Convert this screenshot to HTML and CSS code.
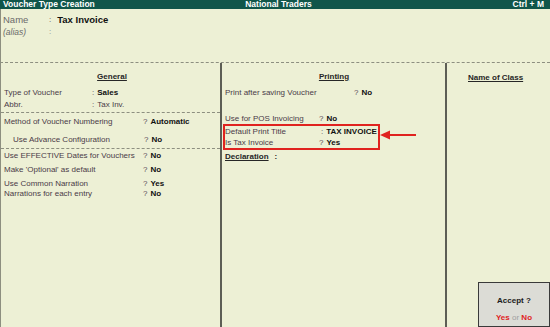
FILE: index.html
```html
<!DOCTYPE html>
<html lang="en">
<head>
    <meta charset="UTF-8">
    <title>Voucher Type Creation</title>
    <link rel="stylesheet" href="styles.css">
</head>
<body>
    <div class="titlebar">
        <span>Voucher Type Creation</span>
        <span class="company">National Traders</span>
        <span class="shortcut">Ctrl + M</span>
    </div>

    <div class="top">
        <div class="row name-row">
            <span class="name-label">Name</span>
            <span class="mark">:</span>
            <span class="name-value">Tax Invoice</span>
        </div>
        <div class="row alias-row">
            <span class="name-label">(alias)</span>
            <span class="mark">:</span>
        </div>
    </div>

    <div class="main">
        <!-- General -->
        <div class="col col-general">
            <div class="section first">
                <div class="heading">General</div>
                <div class="row">
                    <span class="label w-88">Type of Voucher</span>
                    <span class="mark">:</span>
                    <span class="value">Sales</span>
                </div>
                <div class="row">
                    <span class="label w-88">Abbr.</span>
                    <span class="mark">:</span>
                    <span class="plain">Tax Inv.</span>
                </div>
            </div>
            <div class="section second">
                <div class="row">
                    <span class="label w-139">Method of Voucher Numbering</span>
                    <span class="mark">?</span>
                    <span class="value">Automatic</span>
                </div>
                <div class="row advance">
                    <span class="label w-131">Use Advance Configuration</span>
                    <span class="mark">?</span>
                    <span class="value">No</span>
                </div>
            </div>
            <div class="section third">
                <div class="row">
                    <span class="label w-139">Use EFFECTIVE Dates for Vouchers</span>
                    <span class="mark">?</span>
                    <span class="value">No</span>
                </div>
                <div class="row gap">
                    <span class="label w-139">Make 'Optional' as default</span>
                    <span class="mark">?</span>
                    <span class="value">No</span>
                </div>
                <div class="row gap tight">
                    <span class="label w-139">Use Common Narration</span>
                    <span class="mark">?</span>
                    <span class="value">Yes</span>
                </div>
                <div class="row tight">
                    <span class="label w-139">Narrations for each entry</span>
                    <span class="mark">?</span>
                    <span class="value">No</span>
                </div>
            </div>
        </div>

        <!-- Printing -->
        <div class="col col-printing">
            <div class="heading">Printing</div>
            <div class="row">
                <span class="label w-128">Print after saving Voucher</span>
                <span class="mark">?</span>
                <span class="value">No</span>
            </div>
            <div class="row pos">
                <span class="label w-93">Use for POS Invoicing</span>
                <span class="mark">?</span>
                <span class="value">No</span>
            </div>
            <div class="highlight">
                <div class="row">
                    <span class="label w-95">Default Print Title</span>
                    <span class="mark">:</span>
                    <span class="value">TAX INVOICE</span>
                </div>
                <div class="row">
                    <span class="label w-94">Is Tax Invoice</span>
                    <span class="mark">?</span>
                    <span class="value">Yes</span>
                </div>
            </div>
            <div class="row declaration">
                <span class="decl-title">Declaration</span>
                <span class="decl-colon">:</span>
            </div>
        </div>

        <!-- Name of Class -->
        <div class="col col-class">
            <div class="heading left">Name of Class</div>
        </div>
    </div>

    <svg class="arrow" width="40" height="10" viewBox="0 0 40 10">
        <line x1="8" y1="5" x2="36" y2="5" stroke="#e0231f" stroke-width="2"/>
        <polygon points="0,5 10,0.5 10,9.5" fill="#e0231f"/>
    </svg>

    <div class="accept">
        <div class="accept-title">Accept ?</div>
        <div class="accept-choice"><span class="red">Yes</span> <span class="or">or</span> <span class="red">No</span></div>
    </div>
</body>
</html>
```

FILE: styles.css
```css
body {
    margin: 0;
    width: 550px;
    height: 327px;
    overflow: hidden;
    position: relative;
    font-family: 'Liberation Sans', Arial, sans-serif;
    font-size: 8px;
    background-color: #edf0d5;
    color: #4a3b48;
}

.titlebar {
    height: 9px;
    line-height: 9px;
    background-color: #11564a;
    color: #ffffff;
    font-weight: bold;
    font-size: 8.5px;
    padding: 0 6px 0 3px;
    display: grid;
    grid-template-columns: 1fr auto 1fr;
}

.titlebar .company {
    margin-left: 10px;
}

.titlebar .shortcut {
    text-align: right;
}

.top {
    height: 53px;
    border-left: 1px solid #8d8f80;
    padding-left: 2px;
}

.row {
    display: flex;
    height: 12px;
    line-height: 12px;
    white-space: nowrap;
}

.name-row {
    padding-top: 4px;
    height: 13px;
    line-height: 13px;
}

.name-label {
    width: 46px;
    color: #6a6a6a;
    font-size: 9.5px;
}

.alias-row .name-label {
    font-style: italic;
    font-size: 8.5px;
}

.alias-row .mark {
    color: #8a8a8a;
}

.name-value {
    font-weight: bold;
    color: #111111;
    font-size: 9.5px;
    margin-left: 3px;
}

.main {
    display: grid;
    grid-template-columns: 219px 225px 1fr;
    height: 264px;
    border-top: 1px dashed #8d8f80;
    border-left: 1px solid #8d8f80;
    border-bottom: 1px solid #8d8f80;
}

.col-printing {
    border-left: 2px solid #5d5e55;
    padding-left: 1px;
}

.col-class {
    border-left: 2px solid #5d5e55;
}

.heading {
    margin-top: 8px;
    margin-bottom: 4px;
    height: 12px;
    line-height: 12px;
    text-align: center;
    font-weight: bold;
    text-decoration: underline;
    color: #262626;
}

.heading.left {
    text-align: left;
    margin-left: 21px;
    margin-top: 9px;
}

.section {
    border-bottom: 1px dashed #8d8f80;
    padding-left: 3px;
}

.section.first {
    height: 41px;
}

.section.second {
    padding-top: 3px;
    height: 32px;
}

.section.third {
    border-bottom: none;
    padding-top: 1px;
}

.label {
    flex-shrink: 0;
}

.w-88 { width: 88px; }
.w-93 { width: 94px; }
.w-94 { width: 94px; }
.w-95 { width: 96px; }
.w-128 { width: 129px; }
.w-131 { width: 131px; }
.w-139 { width: 139px; }

.mark {
    color: #5a4a58;
    margin-right: 3px;
}

.value {
    font-weight: bold;
    color: #111111;
}

.plain {
    color: #4a3b48;
}

.advance {
    margin-top: 6px;
    padding-left: 9px;
}

.gap {
    margin-top: 2px;
}

.tight {
    height: 10px;
    line-height: 10px;
}

.row.gap.tight {
    margin-top: 3px;
}

.col-printing .row {
    padding-left: 2px;
}

.pos {
    margin-top: 14px;
    height: 11px;
    line-height: 11px;
}

.highlight {
    width: 153px;
    border: 2px solid #e0231f;
    height: 22px;
}

.highlight .row {
    height: 11px;
    line-height: 11px;
    padding-left: 0;
}

.declaration {
    margin-top: 1px;
    font-weight: bold;
    color: #262626;
}

.decl-title {
    text-decoration: underline;
}

.decl-colon {
    margin-left: 6px;
}

.arrow {
    position: absolute;
    left: 380px;
    top: 130px;
}

.accept {
    position: absolute;
    left: 478px;
    top: 282px;
    width: 70px;
    height: 43px;
    border: 1px solid #3a3a3a;
    background-color: #dcdcd6;
    text-align: center;
}

.accept-title {
    margin-top: 13px;
    font-weight: bold;
    color: #1a1a1a;
}

.accept-choice {
    margin-top: 8px;
    font-weight: bold;
}

.accept-choice .red {
    color: #e0231f;
}

.accept-choice .or {
    color: #a0a0a0;
    font-weight: normal;
}
```
